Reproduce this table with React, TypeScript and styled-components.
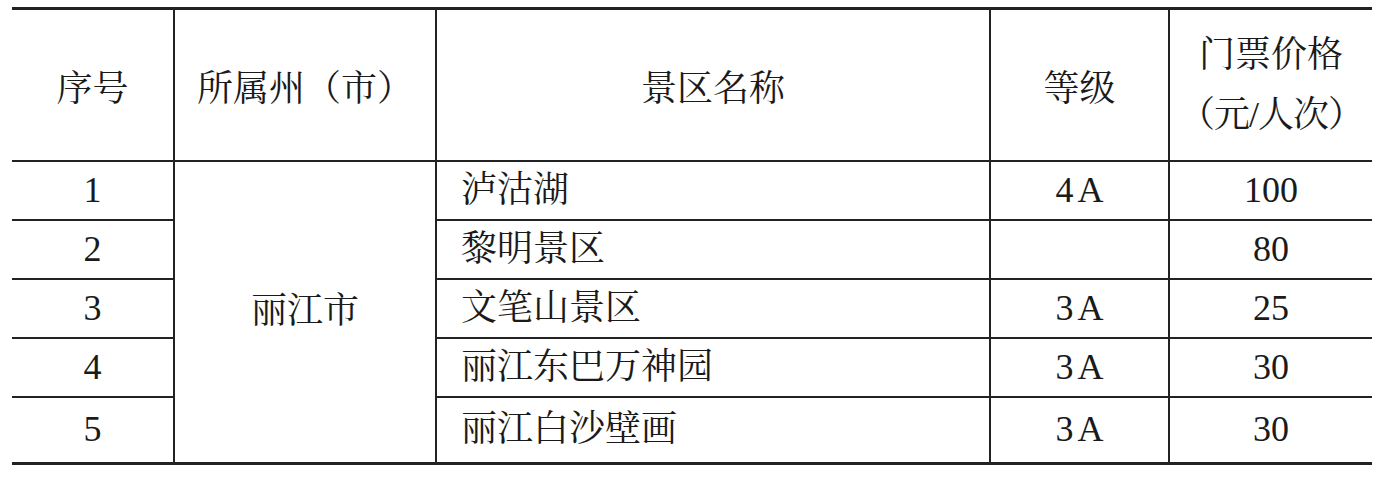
import styled, { createGlobalStyle } from "styled-components";

const GlobalStyle = createGlobalStyle`
  html, body {
    margin: 0;
    padding: 0;
    background: #fff;
  }
`;

const rows = [
  { no: "1", name: "泸沽湖", grade: "4A", price: "100" },
  { no: "2", name: "黎明景区", grade: "", price: "80" },
  { no: "3", name: "文笔山景区", grade: "3A", price: "25" },
  { no: "4", name: "丽江东巴万神园", grade: "3A", price: "30" },
  { no: "5", name: "丽江白沙壁画", grade: "3A", price: "30" },
];

const App = () => {
  return (
    <>
      <GlobalStyle />
      <Page>
        <Table>
          <colgroup>
            <col style={{ width: 162 }} />
            <col style={{ width: 262 }} />
            <col style={{ width: 554 }} />
            <col style={{ width: 179 }} />
            <col style={{ width: 203 }} />
          </colgroup>
          <thead>
            <tr>
              <HeadCell>序号</HeadCell>
              <HeadCell>所属州（市）</HeadCell>
              <HeadCell>景区名称</HeadCell>
              <HeadCell>等级</HeadCell>
              <HeadCell>
                <HeadLine>门票价格</HeadLine>
                <HeadLine $narrow>（元/人次）</HeadLine>
              </HeadCell>
            </tr>
          </thead>
          <tbody>
            {rows.map((r, i) => (
              <Row key={r.no} $last={i === rows.length - 1}>
                <Cell>{r.no}</Cell>
                {i === 0 && <Cell rowSpan={rows.length}>丽江市</Cell>}
                <Cell $left>{r.name}</Cell>
                <Cell>
                  <Grade>{r.grade}</Grade>
                </Cell>
                <Cell>{r.price}</Cell>
              </Row>
            ))}
          </tbody>
        </Table>
      </Page>
    </>
  );
};

export default App;

const Page = styled.div`
  padding: 7px 7px 0 12px;
  font-family: "Liberation Serif", "Noto Serif CJK SC", "Noto Sans CJK SC", serif;
  color: #1a1a1a;
`;

const Table = styled.table`
  width: 1360px;
  border-collapse: collapse;
  table-layout: fixed;
  border-top: 3px solid #222;
  border-bottom: 3px solid #222;
  font-size: 36px;
`;

const HeadCell = styled.th`
  height: 150px;
  padding: 0;
  font-weight: normal;
  text-align: center;
  vertical-align: middle;
  border-left: 2px solid #222;
  border-bottom: 2px solid #222;

  &:first-child {
    border-left: none;
  }
`;

const HeadLine = styled.div<{ $narrow?: boolean }>`
  line-height: 60px;
  letter-spacing: ${({ $narrow }) => ($narrow ? "-1px" : "0")};
`;

const Row = styled.tr<{ $last?: boolean }>`
  height: ${({ $last }) => ($last ? "66px" : "59px")};
`;

const Cell = styled.td<{ $left?: boolean }>`
  padding: 0 0 0 ${({ $left }) => ($left ? "24px" : "0")};
  text-align: ${({ $left }) => ($left ? "left" : "center")};
  vertical-align: middle;
  line-height: 1.2;
  border-left: 2px solid #222;
  border-bottom: 2px solid #222;

  &:first-child {
    border-left: none;
  }
`;

const Grade = styled.span`
  letter-spacing: 4px;
  margin-right: -4px;
`;
